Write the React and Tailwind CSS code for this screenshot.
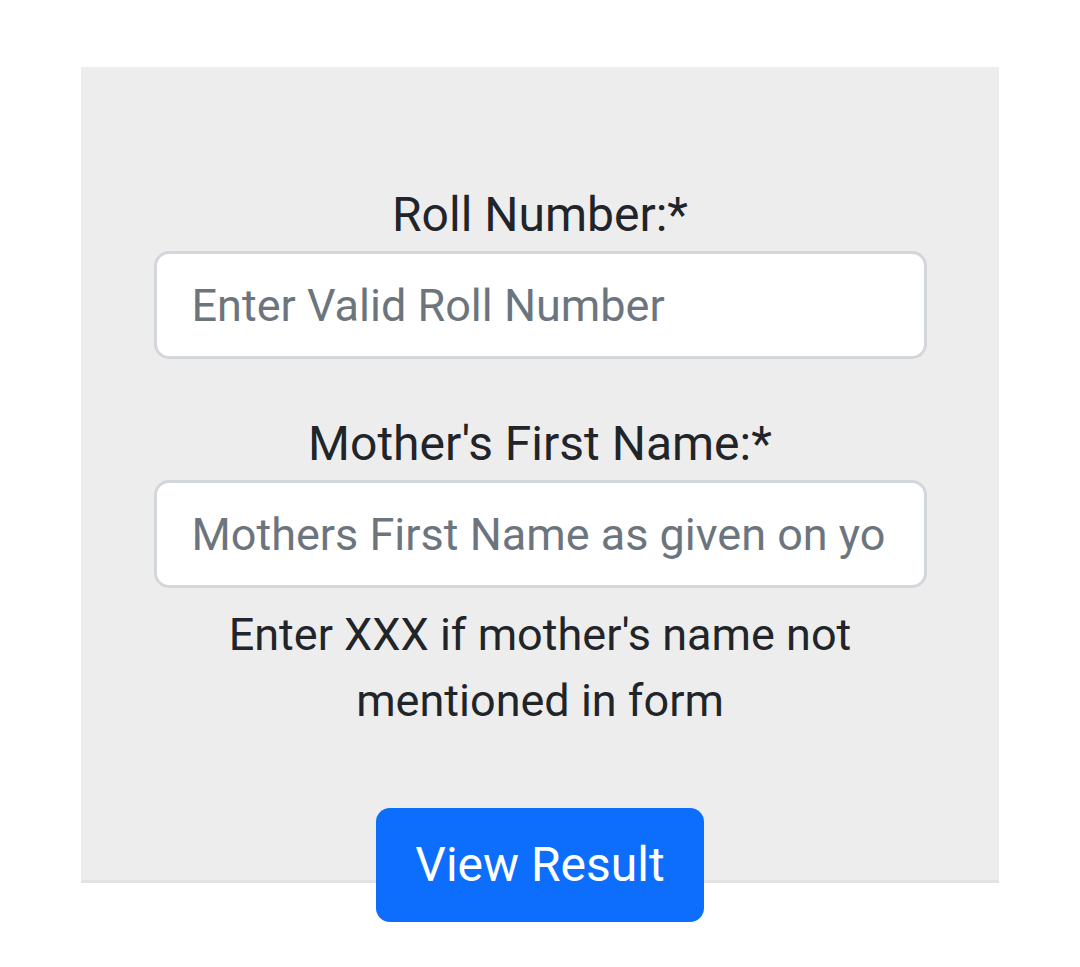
import React from 'react';

const font = { fontFamily: 'Roboto, "Noto Sans", sans-serif' };

const Field = ({ label, placeholder, className = '' }) => (
  <div className={`flex flex-col items-center w-full ${className}`}>
    <label className="text-[48px] leading-[58px] text-[#212529]">{label}</label>
    <input
      type="text"
      placeholder={placeholder}
      className="mt-[7px] w-[773px] h-[108px] bg-white border-[3px] border-[#d3d6da] rounded-[15px] pl-[35px] pr-[39px] text-[45px] text-[#212529] placeholder:text-[#6c757d] outline-none"
    />
  </div>
);

export default function App() {
  return (
    <div className="min-h-screen bg-white pt-[67px]" style={font}>
      <div className="mx-auto w-[918px] h-[816px] bg-[#ededed] border-b-[3px] border-[#e3e3e3] pt-[119px] flex flex-col items-center">
        <Field label="Roll Number:*" placeholder="Enter Valid Roll Number" />
        <Field
          className="mt-[56px]"
          label="Mother's First Name:*"
          placeholder="Mothers First Name as given on your form"
        />
        <p className="mt-[14px] w-[680px] text-center text-[45px] leading-[66px] text-[#212529]">
          Enter XXX if mother's name not mentioned in form
        </p>
        <button className="mt-[74px] shrink-0 w-[328px] h-[114px] rounded-[14px] bg-[#0d6efd] text-white text-[48px] leading-none">
          View Result
        </button>
      </div>
    </div>
  );
}
